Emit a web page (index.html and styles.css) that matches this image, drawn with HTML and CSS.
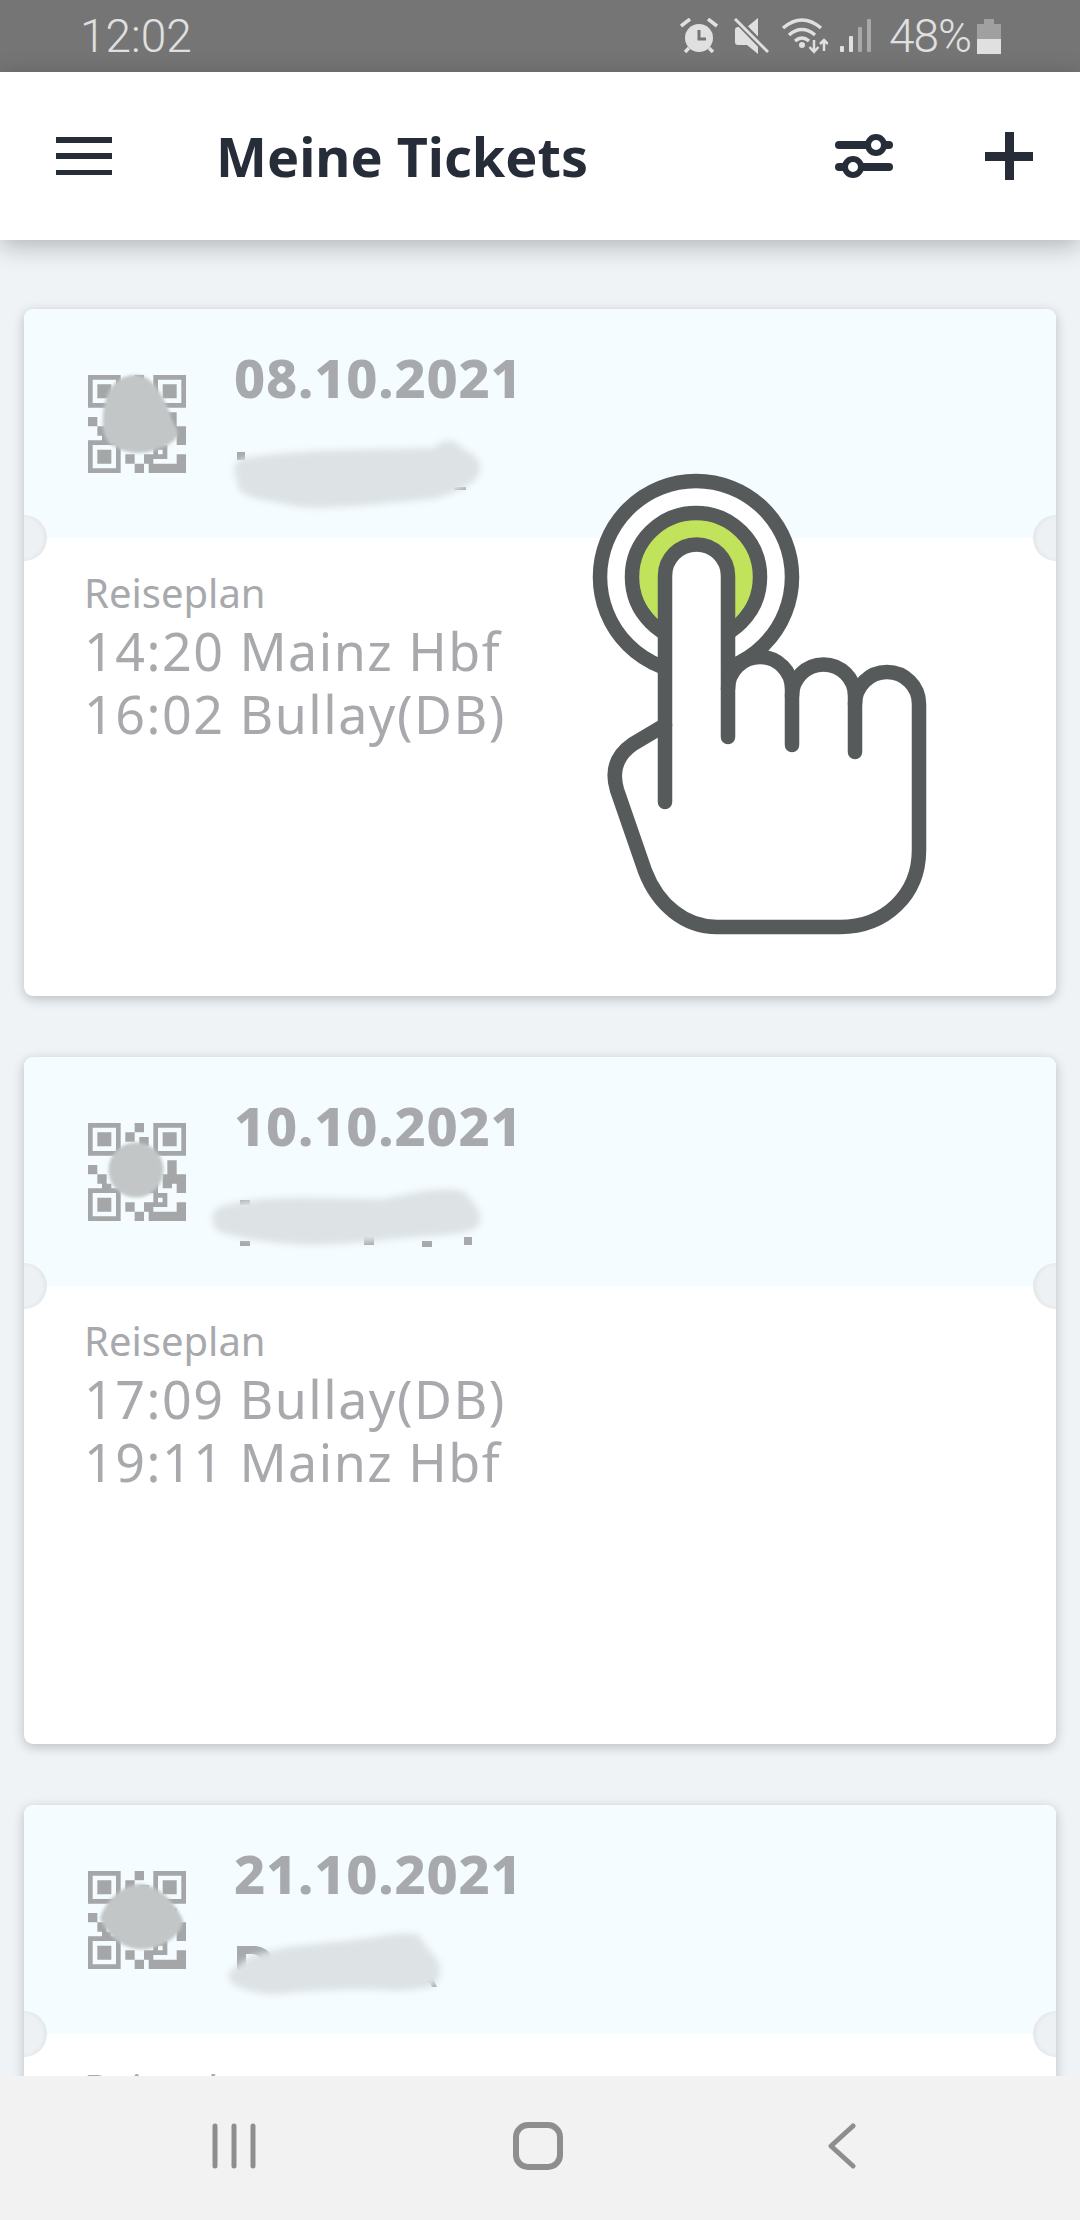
FILE: index.html
```html
<!DOCTYPE html>
<html lang="de">
<head>
    <meta charset="UTF-8">
    <meta name="viewport" content="width=device-width, initial-scale=1.0">
    <title>Meine Tickets</title>
    <link rel="stylesheet" href="styles.css">
</head>
<body>
    <svg class="svg-defs" width="0" height="0">
        <defs>
            <path id="qr-code" fill-rule="evenodd" d="M0 0h7v7H0zM1 1v5h5V1zM2 2h3v3H2zM14 0h7v7h-7zM15 1v5h5V1zM16 2h3v3h-3zM0 14h7v7H0zM1 15v5h5v-5zM2 16h3v3H2zM10 0h2v2h-2zM8 2h2v2H8zM11 3h2v2h-2zM8 5h2v3H8zM0 9h2v2H0zM2 11h2v2H2zM3 13h2v1H3zM9 9h3v3H9zM17 8h2v3h-2zM16 11h5v2h-3v1h-2zM19 13h2v2h-2zM13 13h2v2h-2zM14 15h3v3h-3zM15 16v1h1v-1zM8 17h2v2H8zM10 19h2v2h-2zM12 17h2v2h-2zM13 19h4v2h-4zM19 17h2v4h-4v-2h2z"/>
        </defs>
    </svg>

    <div class="status-bar">
        <span class="status-time">12:02</span>
        <div class="status-icons">
            <svg width="42" height="36" viewBox="0 0 42 36">
                <circle cx="19" cy="20" r="14" fill="#e0e0e0"/>
                <path d="M19 12v9h7" fill="none" stroke="#757575" stroke-width="3"/>
                <path d="M1 8l9-7M28 1l9 7M5 34l4-4M33 34l-4-4" fill="none" stroke="#e0e0e0" stroke-width="3.5"/>
            </svg>
            <svg width="35" height="36" viewBox="0 0 35 36">
                <path d="M24 0L13 9H4Q1 9 1 12V24Q1 27 4 27H13L24 36Z" fill="#e0e0e0"/>
                <path d="M2 1L33 33" stroke="#757575" stroke-width="7"/>
                <path d="M1 1L34 34" stroke="#e0e0e0" stroke-width="3"/>
            </svg>
            <svg width="47" height="36" viewBox="0 0 47 36">
                <g fill="none" stroke="#e0e0e0" stroke-width="3.5">
                    <path d="M2 10Q21 -6 40 10"/>
                    <path d="M8 17Q21 6 34 17"/>
                    <path d="M14 23Q21 17 28 23"/>
                </g>
                <circle cx="21" cy="27" r="3" fill="#e0e0e0"/>
                <path d="M33 22V34M28.500 29L33 34L37.500 29M43 33V22M39 26L43 22L47 26" fill="none" stroke="#e0e0e0" stroke-width="2.500"/>
            </svg>
            <svg width="37" height="34" viewBox="0 0 37 34">
                <rect x="0" y="27" width="4" height="6" rx="1" fill="#e0e0e0"/>
                <rect x="9" y="17" width="4" height="16" rx="1" fill="#e0e0e0"/>
                <rect x="18" y="8" width="4" height="25" rx="1" fill="#a8a8a8"/>
                <rect x="27" y="0" width="4" height="33" rx="1" fill="#a8a8a8"/>
            </svg>
            <span class="status-battery">48%</span>
            <svg class="battery-icon" width="24" height="35" viewBox="0 0 24 35">
                <path d="M7 0H17V5H24V35H0V5H7Z" fill="#a0a0a0"/>
                <rect x="0" y="20" width="24" height="15" fill="#e0e0e0"/>
            </svg>
        </div>
    </div>

    <header class="app-bar">
        <div class="hamburger">
            <span></span>
            <span></span>
            <span></span>
        </div>
        <h1 class="app-title">Meine Tickets</h1>
        <svg class="sliders-icon" width="58" height="44" viewBox="0 0 58 44">
            <g stroke="#272d38" stroke-width="8" stroke-linecap="round">
                <path d="M4 11H54"/>
                <path d="M4 33H54"/>
            </g>
            <circle cx="41" cy="11" r="8" fill="#fff" stroke="#272d38" stroke-width="6"/>
            <circle cx="18" cy="33" r="8" fill="#fff" stroke="#272d38" stroke-width="6"/>
        </svg>
        <div class="plus-icon"></div>
    </header>

    <main class="ticket-list">
        <section class="ticket">
            <div class="ticket-head">
                <svg class="qr" viewBox="0 0 21 21"><use href="#qr-code"/></svg>
                <div class="ticket-date">08.10.2021</div>
                <svg class="smudges" viewBox="0 0 1032 229">
                    <path class="fragment" d="M213 143h8v8h-8zM430 178h12v3h-12z"/>
                    <path class="smudge smudge-qr" d="M111 66C124 66 132 76 139 89C144 98 146 104 148 111C152 118 155 123 153 128C148 134 142 138 136 139C128 143 120 144 113 144C104 144 94 140 86 135C80 128 78 118 79 109C79 98 82 88 86 80C92 72 100 66 111 66Z"/>
                    <path class="smudge smudge-name" d="M216 150C270 140 340 141 410 139C420 128 432 130 440 141C456 146 460 160 452 170C440 180 424 186 410 190C360 194 300 202 270 197C240 190 210 190 213 170C208 160 210 155 216 150Z"/>
                </svg>
            </div>
            <div class="ticket-body">
                <div class="plan-label">Reiseplan</div>
                <div class="plan-stop">14:20 Mainz Hbf</div>
                <div class="plan-stop">16:02 Bullay(DB)</div>
            </div>
            <svg class="tap-hand" width="400" height="500" viewBox="570 450 400 500">
                <g fill="#fff" stroke="#575a5b" stroke-width="14.500" stroke-linecap="round" stroke-linejoin="round">
                    <circle cx="696" cy="577" r="96"/>
                    <circle cx="696" cy="577" r="64" fill="#c1e35c"/>
                    <path stroke="none" d="M665 576A31.500 31.500 0 0 1 728 576V689A32 32 0 0 1 792 689V696A31.500 31.500 0 0 1 855 696V704A32 32 0 0 1 919 704V850C919 895 885 927 840 927H717C685 927 658 905 645 871L617 790C611 770 617 755 633 744L665 725Z"/>
                    <path fill="none" d="M665 802V576A31.500 31.500 0 0 1 728 576V737"/>
                    <path fill="none" d="M728 689A32 32 0 0 1 792 689V745"/>
                    <path fill="none" d="M792 696A31.500 31.500 0 0 1 855 696V752"/>
                    <path fill="none" d="M855 704A32 32 0 0 1 919 704V850C919 895 885 927 840 927H717C685 927 658 905 645 871L617 790C611 770 617 755 633 744L665 725"/>
                </g>
            </svg>
        </section>

        <section class="ticket">
            <div class="ticket-head">
                <svg class="qr" viewBox="0 0 21 21"><use href="#qr-code"/></svg>
                <div class="ticket-date">10.10.2021</div>
                <svg class="smudges" viewBox="0 0 1032 229">
                    <path class="fragment" d="M216 143h10v5h-10zM216 184h10v5h-10zM340 180h10v8h-10zM398 184h10v6h-10zM440 180h8v8h-8z"/>
                    <circle class="smudge smudge-qr" cx="112" cy="113" r="27.500"/>
                    <path class="smudge smudge-name" d="M196 150C240 136 300 142 360 142C390 136 420 128 440 135C450 145 458 155 456 166C450 178 420 178 390 180C350 184 300 190 270 187C240 186 215 180 195 175C186 165 186 155 196 150Z"/>
                </svg>
            </div>
            <div class="ticket-body">
                <div class="plan-label">Reiseplan</div>
                <div class="plan-stop">17:09 Bullay(DB)</div>
                <div class="plan-stop">19:11 Mainz Hbf</div>
            </div>
        </section>

        <section class="ticket">
            <div class="ticket-head">
                <svg class="qr" viewBox="0 0 21 21"><use href="#qr-code"/></svg>
                <div class="ticket-date">21.10.2021</div>
                <svg class="smudges" viewBox="0 0 1032 229">
                    <path class="fragment" fill-rule="evenodd" d="M213 141h16c10 0 17 5 19 12v12h-35zM222 149v12h14v-8c-2-3-5-4-8-4zM403 172h5l5 10h-5l-2-4h-3z"/>
                    <path class="smudge smudge-qr" d="M116 79C134 80 150 96 159 115C158 128 145 140 123 144C104 146 86 136 76 113C82 95 98 80 116 79Z"/>
                    <path class="smudge smudge-name" d="M213 161C225 150 240 147 251 145C270 140 290 140 306 137C340 136 370 126 393 129C400 136 402 144 410 150C418 160 418 172 410 180C395 186 385 184 375 186C340 182 300 186 270 187C255 190 244 190 232 187C215 184 203 178 205 170C206 166 208 164 213 161Z"/>
                </svg>
            </div>
            <div class="ticket-body">
                <div class="plan-label">Reiseplan</div>
            </div>
        </section>
    </main>

    <nav class="nav-bar">
        <svg class="nav-recent" width="44" height="46" viewBox="0 0 44 46">
            <path d="M3 3V43M22 3V43M41 3V43" fill="none" stroke="#8e8e8e" stroke-width="5" stroke-linecap="round"/>
        </svg>
        <div class="nav-home"></div>
        <svg class="nav-back" width="30" height="46" viewBox="0 0 30 46">
            <path d="M27 3L5 23L27 43" fill="none" stroke="#8e8e8e" stroke-width="5" stroke-linecap="round" stroke-linejoin="round"/>
        </svg>
    </nav>
</body>
</html>
```

FILE: styles.css
```css
* {
    box-sizing: border-box;
}
html, body {
    margin: 0;
    height: 2220px;
    overflow: hidden;
}
body {
    display: flex;
    flex-direction: column;
    background-color: #eff3f6;
    font-family: "Noto Sans", sans-serif;
}
.svg-defs {
    position: absolute;
}

/* status bar */
.status-bar {
    height: 72px;
    flex: none;
    display: flex;
    align-items: center;
    padding: 0 79px 0 80px;
    background-color: #757575;
    color: #e0e0e0;
    font-family: Roboto, sans-serif;
    font-size: 46px;
    font-weight: 300;
}
.status-icons {
    margin-left: auto;
    display: flex;
    align-items: center;
    gap: 12px;
}
.status-battery {
    width: 80px;
    letter-spacing: -1px;
    white-space: nowrap;
}
.battery-icon {
    margin-left: -4px;
}

/* top bar */
.app-bar {
    height: 168px;
    flex: none;
    position: relative;
    z-index: 2;
    display: flex;
    align-items: center;
    padding: 0 47px 0 56px;
    background-color: #ffffff;
    box-shadow: 0 6px 24px rgba(0, 0, 0, 0.26);
}
.hamburger {
    width: 56px;
    height: 38px;
    display: flex;
    flex-direction: column;
    justify-content: space-between;
}
.hamburger span {
    height: 5.5px;
    background-color: #272d38;
}
.app-title {
    margin: 0 0 0 104px;
    color: #272d38;
    font-size: 54px;
    font-weight: 700;
}
.sliders-icon {
    margin-left: auto;
}
.plus-icon {
    position: relative;
    width: 48px;
    height: 48px;
    margin-left: 92px;
}
.plus-icon::before,
.plus-icon::after {
    content: "";
    position: absolute;
    background-color: #272d38;
}
.plus-icon::before {
    left: 19.500px;
    top: 0;
    width: 9px;
    height: 48px;
}
.plus-icon::after {
    left: 0;
    top: 19.500px;
    width: 48px;
    height: 9px;
}

/* tickets */
.ticket-list {
    flex: 1;
    min-height: 0;
    overflow: hidden;
    display: flex;
    flex-direction: column;
    gap: 61px;
    padding: 69px 24px 0;
}
.ticket {
    position: relative;
    flex: none;
    height: 687px;
    background-color: #ffffff;
    border-radius: 9px;
    box-shadow: 0 3px 12px rgba(0, 0, 0, 0.22);
}
.ticket-head {
    position: relative;
    height: 229px;
    display: flex;
    align-items: flex-start;
    padding: 66px 0 0 64px;
    background-color: #f4fcff;
    border-radius: 9px 9px 0 0;
}
.ticket-head::before,
.ticket-head::after {
    content: "";
    position: absolute;
    top: 206px;
    width: 23px;
    height: 46px;
    background-color: #eef1f4;
}
.ticket-head::before {
    left: 0;
    border-radius: 0 23px 23px 0;
    box-shadow: inset -2px 0 4px rgba(0, 0, 0, 0.05);
}
.ticket-head::after {
    right: 0;
    border-radius: 23px 0 0 23px;
    box-shadow: inset 2px 0 4px rgba(0, 0, 0, 0.05);
}
.qr {
    width: 98px;
    height: 98px;
    flex: none;
    fill: #a4a6a8;
}
.ticket-date {
    margin: -33px 0 0 48px;
    color: #a7a9ac;
    font-size: 54px;
    font-weight: 800;
    line-height: 70px;
    letter-spacing: 0.8px;
}
.smudges {
    position: absolute;
    left: 0;
    top: 0;
    width: 100%;
    height: 229px;
}
.fragment {
    fill: #a7a9ac;
}
.smudge {
    filter: blur(3px);
}
.smudge-qr {
    fill: #c2c6c7;
    filter: blur(1.5px);
}
.smudge-name {
    fill: #dde2e4;
}
.ticket-body {
    padding: 31px 0 0 60px;
    color: #a7a9ac;
}
.plan-label {
    margin-bottom: 2px;
    font-size: 40px;
    line-height: 48px;
}
.plan-stop {
    font-size: 52px;
    line-height: 63px;
    letter-spacing: 1.5px;
}
.tap-hand {
    position: absolute;
    left: 546px;
    top: 141px;
}

/* bottom nav */
.nav-bar {
    height: 144px;
    flex: none;
    position: relative;
    z-index: 2;
    background-color: #f2f2f2;
    display: flex;
    align-items: center;
    padding: 0 0 4px 212px;
}
.nav-home {
    width: 50px;
    height: 48px;
    margin-left: 257px;
    border: 6px solid #8e8e8e;
    border-radius: 15px;
}
.nav-back {
    margin-left: 263px;
}
```
